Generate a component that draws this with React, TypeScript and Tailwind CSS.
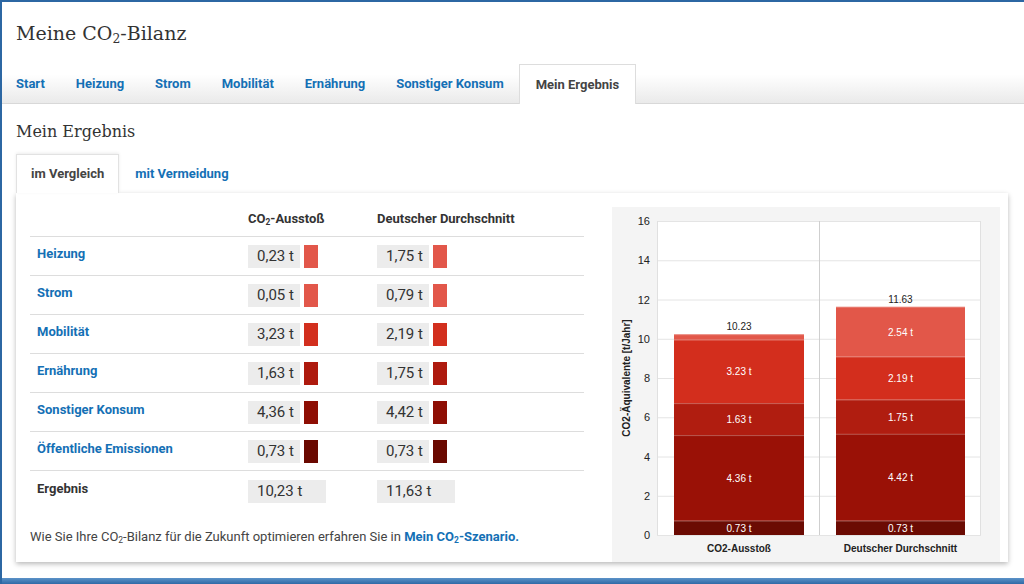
import React from 'react';

const UI = "font-['Roboto',sans-serif]";
const SERIF = "font-['DejaVu_Serif',serif]";

const navTabs = ['Start', 'Heizung', 'Strom', 'Mobilität', 'Ernährung', 'Sonstiger Konsum', 'Mein Ergebnis'];

const rows = [
  { label: 'Heizung', mine: '0,23 t', avg: '1,75 t', color: '#e2574a' },
  { label: 'Strom', mine: '0,05 t', avg: '0,79 t', color: '#e2574a' },
  { label: 'Mobilität', mine: '3,23 t', avg: '2,19 t', color: '#d22f1e' },
  { label: 'Ernährung', mine: '1,63 t', avg: '1,75 t', color: '#ae1a0e' },
  { label: 'Sonstiger Konsum', mine: '4,36 t', avg: '4,42 t', color: '#8e0e04' },
  { label: 'Öffentliche Emissionen', mine: '0,73 t', avg: '0,73 t', color: '#6a0800' },
];

// bottom-up stacks for the chart
const stacks = [
  {
    x: 62,
    w: 130,
    total: '10.23',
    label: 'CO2-Ausstoß',
    segs: [
      { v: 0.73, c: '#6b0b03', t: '0.73 t' },
      { v: 4.36, c: '#9a1106', t: '4.36 t' },
      { v: 1.63, c: '#b01d10', t: '1.63 t' },
      { v: 3.23, c: '#d32e1d', t: '3.23 t' },
      { v: 0.28, c: '#e25749', t: '' },
    ],
  },
  {
    x: 224,
    w: 129,
    total: '11.63',
    label: 'Deutscher Durchschnitt',
    segs: [
      { v: 0.73, c: '#6b0b03', t: '0.73 t' },
      { v: 4.42, c: '#9a1106', t: '4.42 t' },
      { v: 1.75, c: '#b01d10', t: '1.75 t' },
      { v: 2.19, c: '#d32e1d', t: '2.19 t' },
      { v: 2.54, c: '#e25749', t: '2.54 t' },
    ],
  },
];

const PLOT_TOP = 14;
const PLOT_BOTTOM = 328;
const UNIT = (PLOT_BOTTOM - PLOT_TOP) / 16;
const yOf = (v: number) => PLOT_BOTTOM - v * UNIT;

function Chart() {
  return (
    <svg width="388" height="355" viewBox="0 0 388 355" className="block">
      <rect x="45" y={PLOT_TOP} width="324" height={PLOT_BOTTOM - PLOT_TOP} fill="#fff" />
      {[0, 2, 4, 6, 8, 10, 12, 14, 16].map((v) => (
        <g key={v}>
          <line x1="45" x2="369" y1={yOf(v) + 0.5} y2={yOf(v) + 0.5} stroke="#e4e4e4" />
          <text
            x="38"
            y={yOf(v) + 4}
            textAnchor="end"
            fontSize="11"
            fill="#222"
            fontFamily="Liberation Sans, Arial, sans-serif"
          >
            {v}
          </text>
        </g>
      ))}
      <line x1="45.5" x2="45.5" y1={PLOT_TOP} y2={PLOT_BOTTOM} stroke="#e0e0e0" />
      <line x1="207.5" x2="207.5" y1={PLOT_TOP} y2={PLOT_BOTTOM} stroke="#cfcfcf" />
      <line x1="368.5" x2="368.5" y1={PLOT_TOP} y2={PLOT_BOTTOM} stroke="#e0e0e0" />
      {stacks.map((s) => {
        let acc = 0;
        const total = s.segs.reduce((a, b) => a + b.v, 0);
        return (
          <g key={s.label}>
            {s.segs.map((seg, i) => {
              const y1 = yOf(acc + seg.v);
              const y0 = yOf(acc);
              acc += seg.v;
              return (
                <g key={i}>
                  <rect x={s.x} y={y1} width={s.w} height={y0 - y1} fill={seg.c} />
                  <line x1={s.x} x2={s.x + s.w} y1={y1 + 0.5} y2={y1 + 0.5} stroke="rgba(255,255,255,0.25)" />
                  {seg.t && (
                    <text
                      x={s.x + s.w / 2}
                      y={(y0 + y1) / 2 + 4}
                      textAnchor="middle"
                      fontSize="10"
                      fill="#fff"
                      fontFamily="Liberation Sans, Arial, sans-serif"
                    >
                      {seg.t}
                    </text>
                  )}
                </g>
              );
            })}
            <text
              x={s.x + s.w / 2}
              y={yOf(total) - 4}
              textAnchor="middle"
              fontSize="10"
              fill="#222"
              fontFamily="Liberation Sans, Arial, sans-serif"
            >
              {s.total}
            </text>
            <text
              x={s.x + s.w / 2}
              y="345"
              textAnchor="middle"
              fontSize="10"
              fontWeight="bold"
              fill="#222"
              fontFamily="Liberation Sans, Arial, sans-serif"
            >
              {s.label}
            </text>
          </g>
        );
      })}
      <text
        transform="translate(18 171) rotate(-90)"
        textAnchor="middle"
        fontSize="10"
        fontWeight="bold"
        fill="#222"
        fontFamily="Liberation Sans, Arial, sans-serif"
      >
        CO2-Äquivalente [t/Jahr]
      </text>
    </svg>
  );
}

function Value({ text, color, wide }: { text: string; color?: string; wide?: boolean }) {
  return (
    <div className="flex items-stretch gap-[4px] h-[23px]">
      <div className={`${wide ? 'w-[78px]' : 'w-[52px]'} bg-[#ececec] pl-[9px] text-[15px] leading-[23px] text-[#333]`}>
        {text}
      </div>
      {color && <div className="w-[14px]" style={{ backgroundColor: color }} />}
    </div>
  );
}

function Co2({ className = '' }: { className?: string }) {
  return (
    <span className={className}>
      CO<sub className="text-[0.65em]">2</sub>
    </span>
  );
}

export default function App() {
  return (
    <div className={`${UI} w-[1024px] h-[584px] bg-white border-l-2 border-t-2 border-[#2c67a3] flex flex-col overflow-hidden`}>
      <h1 className={`${SERIF} text-[19px] leading-[28px] text-[#333] pl-[14px] pt-[17px]`}>
        Meine CO<sub className="text-[0.65em]">2</sub>-Bilanz
      </h1>

      <nav className="mt-[18px] h-[39px] flex items-end border-b border-[#d8d8d8] bg-gradient-to-b from-white from-25% to-[#eaeaea]">
        {navTabs.map((t) => {
          const active = t === 'Mein Ergebnis';
          return (
            <div
              key={t}
              className={`h-[39px] px-[15.5px] flex items-center text-[13px] font-bold ${
                active
                  ? 'bg-white border border-b-0 border-[#dddddd] text-[#444] -mb-px h-[40px]'
                  : 'text-[#1470b5] first:pl-[14px]'
              }`}
            >
              {t}
            </div>
          );
        })}
      </nav>

      <h2 className={`${SERIF} text-[16px] leading-[24px] text-[#333] pl-[14px] mt-[16px]`}>Mein Ergebnis</h2>

      <div className="mx-[14px] mr-[16px] mt-[10px] flex flex-col">
        <div className="flex h-[39px] items-stretch">
          <div className="bg-white px-[14px] flex items-center text-[13px] font-bold text-[#444] border border-b-0 border-[#e2e2e2] shadow-[0_-1px_3px_rgba(0,0,0,0.08)] relative z-10">
            im Vergleich
          </div>
          <div className="px-[16px] flex items-center text-[13px] font-bold text-[#1470b5]">mit Vermeidung</div>
        </div>

        <div className="bg-white h-[369px] shadow-[0_2px_5px_rgba(0,0,0,0.28)] flex pl-[14px] pt-[14px] pr-[8px] gap-[28px]">
          <div className="w-[554px] flex flex-col">
            <div className="flex h-[30px] border-b border-[#dddddd] text-[13px] font-bold text-[#333] pt-[2px]">
              <div className="w-[218px]" />
              <div className="w-[129px]">
                <Co2 />-Ausstoß
              </div>
              <div>Deutscher Durchschnitt</div>
            </div>
            {rows.map((r) => (
              <div key={r.label} className="flex h-[39px] items-center border-b border-[#dddddd]">
                <div className="w-[218px] pl-[7px] text-[13px] font-bold text-[#1470b5] -mt-[5px]">{r.label}</div>
                <div className="w-[129px]">
                  <Value text={r.mine} color={r.color} />
                </div>
                <Value text={r.avg} color={r.color} />
              </div>
            ))}
            <div className="flex h-[40px] items-center">
              <div className="w-[218px] pl-[7px] text-[13px] font-bold text-[#333] -mt-[5px]">Ergebnis</div>
              <div className="w-[129px]">
                <Value text="10,23 t" wide />
              </div>
              <Value text="11,63 t" wide />
            </div>
            <p className="mt-[16px] text-[13px] text-[#444]">
              Wie Sie Ihre <Co2 />-Bilanz für die Zukunft optimieren erfahren Sie in{' '}
              <span className="font-bold text-[#1470b5]">
                Mein <Co2 />-Szenario.
              </span>
            </p>
          </div>
          <div className="w-[388px] h-[355px] bg-[#f4f4f4]">
            <Chart />
          </div>
        </div>
      </div>

      <div className="mt-auto h-[6px] bg-gradient-to-b from-[#5b92c8] to-[#2f6aa6]" />
    </div>
  );
}
